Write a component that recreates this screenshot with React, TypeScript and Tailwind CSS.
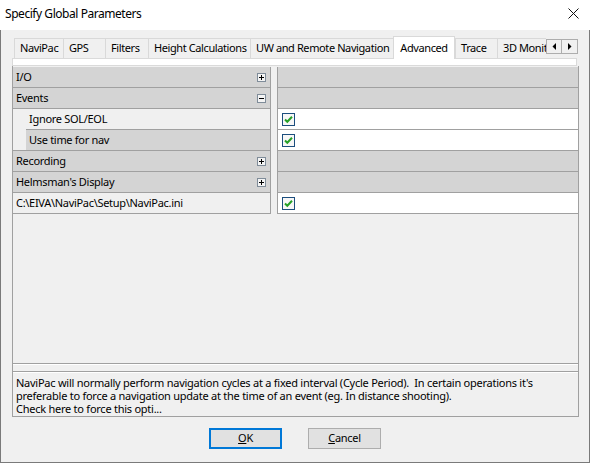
import React from 'react';

type Row = {
  label: string;
  cat?: boolean;
  open?: boolean;
  indent?: boolean;
  fullLine?: boolean;
  light?: boolean;
};

const rows: Row[] = [
  { label: 'I/O', cat: true, open: false },
  { label: 'Events', cat: true, open: true },
  { label: 'Ignore SOL/EOL', indent: true, light: true },
  { label: 'Use time for nav', indent: true, fullLine: true },
  { label: 'Recording', cat: true, open: false },
  { label: "Helmsman's Display", cat: true, open: false },
  { label: 'C:\\EIVA\\NaviPac\\Setup\\NaviPac.ini', light: true },
];

const tabs = [
  { name: 'NaviPac', w: 'w-[49px]' },
  { name: 'GPS', w: 'w-[42px]' },
  { name: 'Filters', w: 'w-[43px]' },
  { name: 'Height Calculations', w: 'w-[102px]' },
  { name: 'UW and Remote Navigation', w: 'w-[143px]' },
  { name: 'Advanced', w: 'w-[62px]', active: true },
  { name: 'Trace', w: 'w-[42px]' },
  { name: '3D Monit', w: 'w-[50px]' },
];

function Expander({ open }: { open?: boolean }) {
  return (
    <svg width="9" height="9" viewBox="0 0 9 9" className="shrink-0">
      <rect x="0.5" y="0.5" width="8" height="8" fill="#f4f4f4" stroke="#7f8c99" />
      <line x1="2" y1="4.5" x2="7" y2="4.5" stroke="#000" />
      {!open && <line x1="4.5" y1="2" x2="4.5" y2="7" stroke="#000" />}
    </svg>
  );
}

function Check() {
  return (
    <svg width="13" height="13" viewBox="0 0 13 13" className="shrink-0">
      <rect x="0.5" y="0.5" width="12" height="12" fill="#f7f7f7" stroke="#1c4e7e" />
      <path d="M3 6.5 L5.3 8.8 L10 3.8" fill="none" stroke="#26a026" strokeWidth="2" />
    </svg>
  );
}

export default function App() {
  return (
    <div className="w-[590px] h-[463px] bg-[#f0f0f0] flex flex-col overflow-hidden text-black font-['Noto_Sans',sans-serif] text-[11px] tracking-[-0.3px]">
      {/* Title bar */}
      <div className="h-[30px] bg-white flex items-center justify-between pl-[5px] pr-[11px] pb-[3px] shrink-0">
        <span className="text-[12px] tracking-[-0.45px]">Specify Global Parameters</span>
        <svg width="11" height="11" viewBox="0 0 11 11">
          <path d="M0.5 0.5 L10.5 10.5 M10.5 0.5 L0.5 10.5" stroke="#111" strokeWidth="1" />
        </svg>
      </div>

      <div className="flex-1 flex flex-col border-x border-b border-[#7a7a7a]">
        {/* Tabs */}
        <div className="flex items-end h-[23px] mt-[6px] relative z-10">
          <div className="flex items-end w-[545px] h-[23px] overflow-hidden pl-[13px] tracking-[-0.4px]">
            {tabs.map((t) =>
              t.active ? (
                <div
                  key={t.name}
                  className={`${t.w} shrink-0 h-[23px] bg-white border-x border-t border-[#d9d9d9] flex items-start pt-[3px] justify-center`}
                >
                  {t.name}
                </div>
              ) : (
                <div
                  key={t.name}
                  className={`${t.w} shrink-0 h-[20px] mb-px border-l border-t border-[#d9d9d9] flex items-center pl-[5px] whitespace-nowrap`}
                >
                  {t.name}
                </div>
              )
            )}
          </div>
          <div className="flex self-start mt-[3px]">
            <div className="w-[16px] h-[15px] border border-[#adadad] flex items-center justify-center">
              <svg width="4" height="7" viewBox="0 0 4 7"><path d="M4 0 L0.5 3.5 L4 7Z" fill="#000" /></svg>
            </div>
            <div className="w-[16px] h-[15px] border border-l-0 border-[#adadad] flex items-center justify-center">
              <svg width="4" height="7" viewBox="0 0 4 7"><path d="M0 0 L3.5 3.5 L0 7Z" fill="#000" /></svg>
            </div>
          </div>
        </div>

        {/* Tab page */}
        <div className="ml-[11px] w-[567px] -mt-px flex flex-col">
          <div className="h-[8px] bg-white border border-[#dadada] mr-[2px]" />
          <div className="h-[351px] flex flex-col border-x border-b border-[#a0a0a0]">
            <div className="pt-px">
              {rows.map((r) => {
                const nameBg = r.cat ? 'bg-[#d4d4d4]' : r.light ? 'bg-[#f0f0f0]' : 'bg-[#d4d4d4]';
                return (
                  <div key={r.label} className="flex h-[21px]">
                    <div className={`w-[257px] flex ${r.fullLine ? 'border-b border-[#a0a0a0]' : ''}`}>
                      {r.indent && <div className="w-[13px] bg-[#f0f0f0] shrink-0" />}
                      <div
                        className={`flex-1 flex items-center pl-[3px] pr-[4px] ${nameBg} ${r.fullLine ? '' : 'border-b border-[#a0a0a0]'}`}
                      >
                        <span className="whitespace-nowrap">{r.label}</span>
                        {r.cat && (
                          <span className="ml-auto flex">
                            <Expander open={r.open} />
                          </span>
                        )}
                      </div>
                    </div>
                    <div className="w-[8px] border-x border-[#a0a0a0] bg-[#f0f0f0]" />
                    <div
                      className={`flex-1 flex items-center pl-[4px] border-b border-[#a0a0a0] ${r.cat ? 'bg-[#d4d4d4]' : 'bg-white'}`}
                    >
                      {!r.cat && <Check />}
                    </div>
                  </div>
                );
              })}
            </div>
            <div className="flex-1" />
            <div className="h-[2px] border-t border-[#a0a0a0] bg-white" />
            <div className="h-[6px]" />
            <div className="h-[2px] border-t border-[#a0a0a0] bg-white" />
            <div className="h-[43px] pl-[3px] pt-[3px] leading-[13px] tracking-[-0.25px]">
              <p className="whitespace-pre h-[13px]">
                NaviPac will normally perform navigation cycles at a fixed interval (Cycle Period).  In certain operations it's
              </p>
              <p className="whitespace-pre h-[13px]">
                preferable to force a navigation update at the time of an event (eg. In distance shooting).
              </p>
              <p className="whitespace-pre h-[13px]">Check here to force this opti...</p>
            </div>
          </div>
        </div>

        {/* Buttons */}
        <div className="flex gap-[26px] pl-[208px] mt-[11px]">
          <button className="w-[73px] h-[21px] bg-[#e1e1e1] border-2 border-[#0078d7] flex items-center justify-center">
            <span><span className="underline">O</span>K</span>
          </button>
          <button className="w-[73px] h-[21px] bg-[#e1e1e1] border border-[#adadad] flex items-center justify-center">
            <span><span className="underline">C</span>ancel</span>
          </button>
        </div>
      </div>
    </div>
  );
}
